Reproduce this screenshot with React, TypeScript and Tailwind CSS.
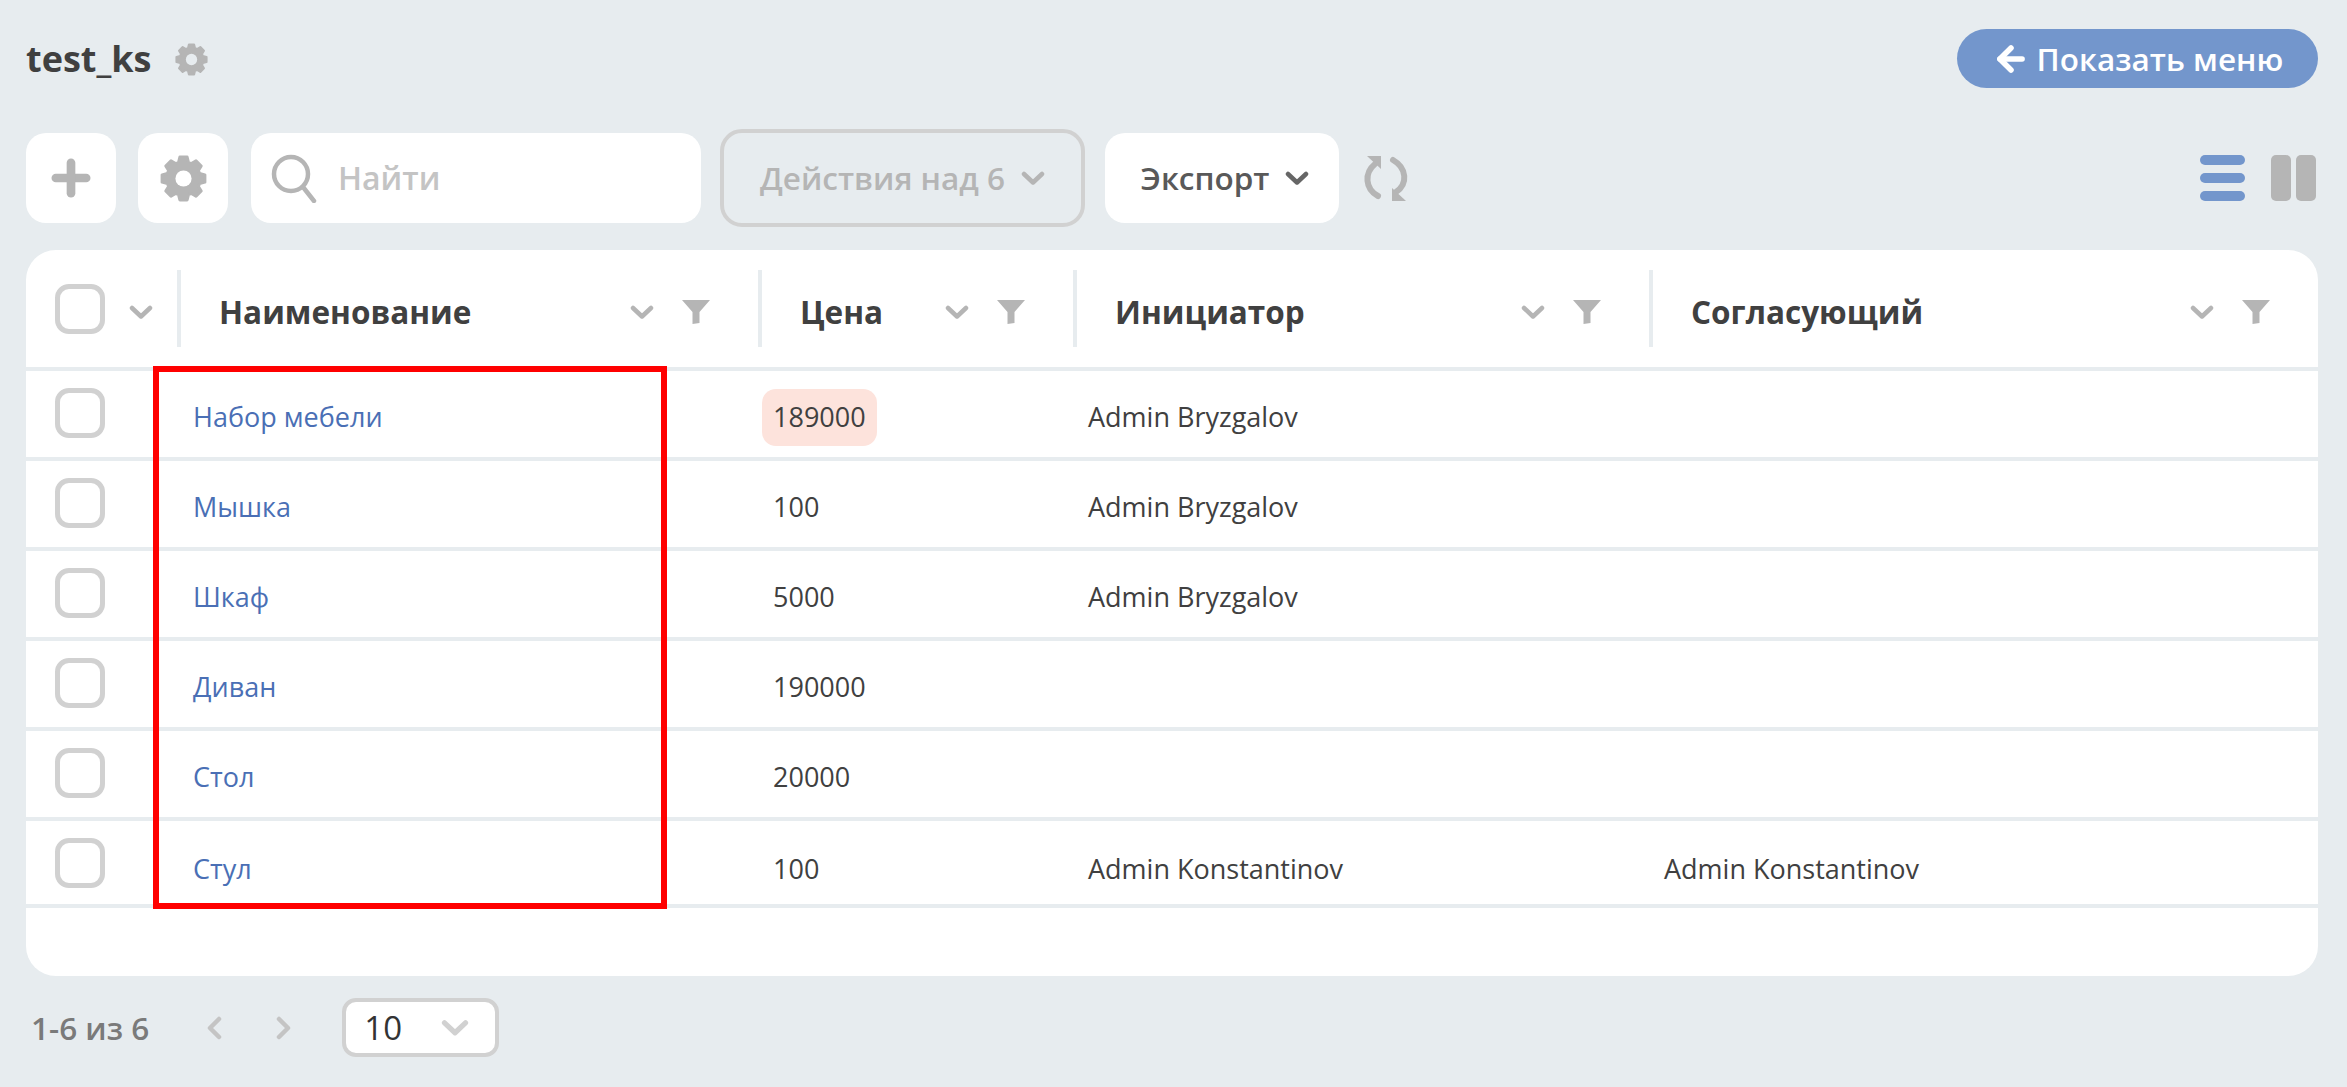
import { Plus, ArrowLeft } from "lucide-react";

const font = { fontFamily: '"Open Sans", "Noto Sans", sans-serif' };

const rows = [
  { name: "Набор мебели", price: "189000", initiator: "Admin Bryzgalov", approver: "", hot: true },
  { name: "Мышка", price: "100", initiator: "Admin Bryzgalov", approver: "" },
  { name: "Шкаф", price: "5000", initiator: "Admin Bryzgalov", approver: "" },
  { name: "Диван", price: "190000", initiator: "", approver: "" },
  { name: "Стол", price: "20000", initiator: "", approver: "" },
  { name: "Стул", price: "100", initiator: "Admin Konstantinov", approver: "Admin Konstantinov" },
];

const columns = ["Наименование", "Цена", "Инициатор", "Согласующий"];

// 8 teeth, one on each axis and diagonal
const gearPath = () => {
  const pts: string[] = [];
  for (let i = 0; i < 8; i++) {
    const a = (i * Math.PI) / 4 - Math.PI / 2;
    const corners: [number, number][] = [
      [11.5, -0.3],
      [14.8, -0.17],
      [14.8, 0.17],
      [11.5, 0.3],
    ];
    corners.forEach(([r, d]) => {
      pts.push(`${(16 + r * Math.cos(a + d)).toFixed(2)} ${(16 + r * Math.sin(a + d)).toFixed(2)}`);
    });
  }
  return `M${pts.join("L")}Z`;
};

const Gear = ({ className }: { className: string }) => (
  <svg viewBox="0 0 32 32" className={className}>
    <path d={gearPath()} fill="currentColor" stroke="currentColor" strokeWidth="2" strokeLinejoin="round" />
    <circle cx="16" cy="16" r="5.5" fill="white" />
  </svg>
);

const TitleGear = () => (
  <svg viewBox="0 0 32 32" className="w-[33px] h-[33px] mt-[2px] text-[#b5b5b5]">
    <path d={gearPath()} fill="currentColor" stroke="currentColor" strokeWidth="2" strokeLinejoin="round" />
    <circle cx="16" cy="16" r="5.5" fill="#e7ecef" />
  </svg>
);

const Chevron = ({ className }: { className: string }) => (
  <svg viewBox="0 0 24 14" className={className} fill="none" stroke="currentColor" strokeWidth="4.5" strokeLinecap="round" strokeLinejoin="round">
    <path d="M3 3l9 8.5L21 3" />
  </svg>
);

const Funnel = () => (
  <svg viewBox="0 0 28 24" className="w-[28px] h-[24px] text-[#b5b5b5]" fill="currentColor">
    <path d="M0 0h28L17.5 12v11l-7 1V12z" />
  </svg>
);

const Checkbox = () => (
  <div className="w-[50px] h-[50px] rounded-[14px] border-[5px] border-[#d1d1d1] bg-white" />
);

export default function App() {
  return (
    <div style={font} className="w-[2347px] h-[1087px] bg-[#e7ecef] pl-[26px] pr-[29px] pt-[29px] overflow-hidden">
      <div className="flex items-center justify-between h-[59px]">
        <div className="flex items-center gap-[24px]">
          <span className="text-[36px] font-bold text-[#404040]">test_ks</span>
          <TitleGear />
        </div>
        <button className="flex items-center justify-center gap-[7px] w-[361px] h-[59px] rounded-full bg-[#7396cc] text-white text-[31.5px] font-semibold">
          <ArrowLeft size={38} strokeWidth={3.5} />
          Показать меню
        </button>
      </div>

      <div className="flex items-center h-[98px] mt-[41px]">
        <button className="flex items-center justify-center w-[90px] h-[90px] rounded-[20px] bg-white text-[#b5b5b5]">
          <Plus size={52} strokeWidth={4} />
        </button>
        <button className="flex items-center justify-center w-[90px] h-[90px] ml-[22px] rounded-[20px] bg-white">
          <Gear className="w-[47px] h-[47px] text-[#b5b5b5]" />
        </button>
        <div className="flex items-center w-[450px] h-[90px] ml-[23px] pl-[20px] rounded-[20px] bg-white">
          <svg viewBox="0 0 46 50" className="w-[46px] h-[50px] text-[#b5b5b5]" fill="none" stroke="currentColor" strokeWidth="4.5" strokeLinecap="round">
            <circle cx="20" cy="21" r="17" />
            <path d="M32 34l11 14" />
          </svg>
          <span className="ml-[21px] text-[32px] font-semibold text-[#c4c4c4]">Найти</span>
        </div>
        <button className="flex items-center justify-center gap-[16px] w-[365px] h-[98px] ml-[19px] rounded-[22px] border-[4px] border-[#d1d1d1] text-[31.5px] font-semibold text-[#b5b5b5]">
          Действия над 6
          <Chevron className="w-[24px] h-[14px] text-[#b5b5b5]" />
        </button>
        <button className="flex items-center justify-center gap-[16px] w-[234px] h-[90px] ml-[20px] pl-[6px] rounded-[20px] bg-white text-[31.5px] font-semibold text-[#595959]">
          Экспорт
          <Chevron className="w-[24px] h-[14px] text-[#666666]" />
        </button>
        <svg viewBox="0 0 46 46" className="w-[46px] h-[46px] ml-[24px] text-[#b5b5b5]" fill="none" stroke="currentColor" strokeWidth="6" strokeLinecap="round">
          <path d="M12 9C1 18 2 34 15 41" />
          <path d="M30 5C44 13 45 29 33 37" />
          <path d="M4 1h14v13z" fill="currentColor" stroke="none" />
          <path d="M29 33v13h14z" fill="currentColor" stroke="none" />
        </svg>
        <div className="ml-auto flex items-center gap-[26px] pr-[2px]">
          <div className="flex flex-col gap-[8px] w-[45px]">
            <div className="h-[10px] rounded-full bg-[#7396cc]" />
            <div className="h-[10px] rounded-full bg-[#7396cc]" />
            <div className="h-[10px] rounded-full bg-[#7396cc]" />
          </div>
          <div className="flex gap-[5px]">
            <div className="w-[20px] h-[46px] rounded-[5px] bg-[#b5b5b5]" />
            <div className="w-[20px] h-[46px] rounded-[5px] bg-[#b5b5b5]" />
          </div>
        </div>
      </div>

      <div className="relative mt-[23px] h-[726px] rounded-[30px] bg-white">
        <div className="grid grid-cols-[151px_581px_315px_576px_1fr] h-[117px] items-center">
          <div className="flex items-center gap-[24px] pl-[29px]">
            <Checkbox />
            <Chevron className="w-[24px] h-[14px] mt-[7px] text-[#b5b5b5]" />
          </div>
          {columns.map((col) => (
            <div key={col} className="flex items-center h-[77px] pt-[6px] pl-[38px] pr-[48px] border-l-[4px] border-[#e7ecef]">
              <span className="text-[31.5px] font-bold text-[#404040]">{col}</span>
              <Chevron className="w-[24px] h-[14px] ml-auto text-[#b5b5b5]" />
              <div className="ml-[28px]">
                <Funnel />
              </div>
            </div>
          ))}
        </div>

        {rows.map((row, i) => (
          <div
            key={row.name}
            className={`grid grid-cols-[152px_581px_315px_577px_1fr] border-t-[4px] border-[#e7ecef] text-[27px] text-[#404040] ${i === 5 ? "h-[91px] border-b-[4px]" : "h-[90px]"}`}
          >
            <div className="pl-[29px] pt-[17px]">
              <Checkbox />
            </div>
            <div className={`pl-[15px] text-[#4a6fb5] ${i === 5 ? "pt-[28px]" : "pt-[26px]"}`}>{row.name}</div>
            <div className={i === 5 ? "pt-[20px]" : "pt-[18px]"}>
              <span className={`inline-block px-[11px] py-[8px] ml-[3px] rounded-[14px] ${row.hot ? "bg-[#fde3dc]" : ""}`}>{row.price}</span>
            </div>
            <div className={`pl-[14px] ${i === 5 ? "pt-[28px]" : "pt-[26px]"}`}>{row.initiator}</div>
            <div className={`pl-[13px] ${i === 5 ? "pt-[28px]" : "pt-[26px]"}`}>{row.approver}</div>
          </div>
        ))}

        {/* annotation frame drawn over the table */}
        <div className="absolute left-[127px] top-[116px] w-[514px] h-[543px] border-[6px] border-[#ff0000]" />
      </div>

      <div className="flex items-center mt-[22px] h-[59px]">
        <span className="ml-[5px] text-[31.5px] font-semibold text-[#7a7a7a]">1-6 из 6</span>
        <svg viewBox="0 0 16 24" className="w-[16px] h-[24px] ml-[57px] text-[#c4c4c4]" fill="none" stroke="currentColor" strokeWidth="4.5" strokeLinecap="round" strokeLinejoin="round">
          <path d="M13 3L4 12l9 9" />
        </svg>
        <svg viewBox="0 0 16 24" className="w-[16px] h-[24px] ml-[54px] text-[#c4c4c4]" fill="none" stroke="currentColor" strokeWidth="4.5" strokeLinecap="round" strokeLinejoin="round">
          <path d="M3 3l9 9-9 9" />
        </svg>
        <div className="flex items-center w-[157px] h-[59px] ml-[50px] pl-[18px] rounded-[14px] border-[4px] border-[#d1d1d1] bg-white">
          <span className="text-[33px] text-[#333333]">10</span>
          <Chevron className="w-[28px] h-[17px] ml-[auto] mr-[26px] text-[#d1d1d1]" />
        </div>
      </div>
    </div>
  );
}
